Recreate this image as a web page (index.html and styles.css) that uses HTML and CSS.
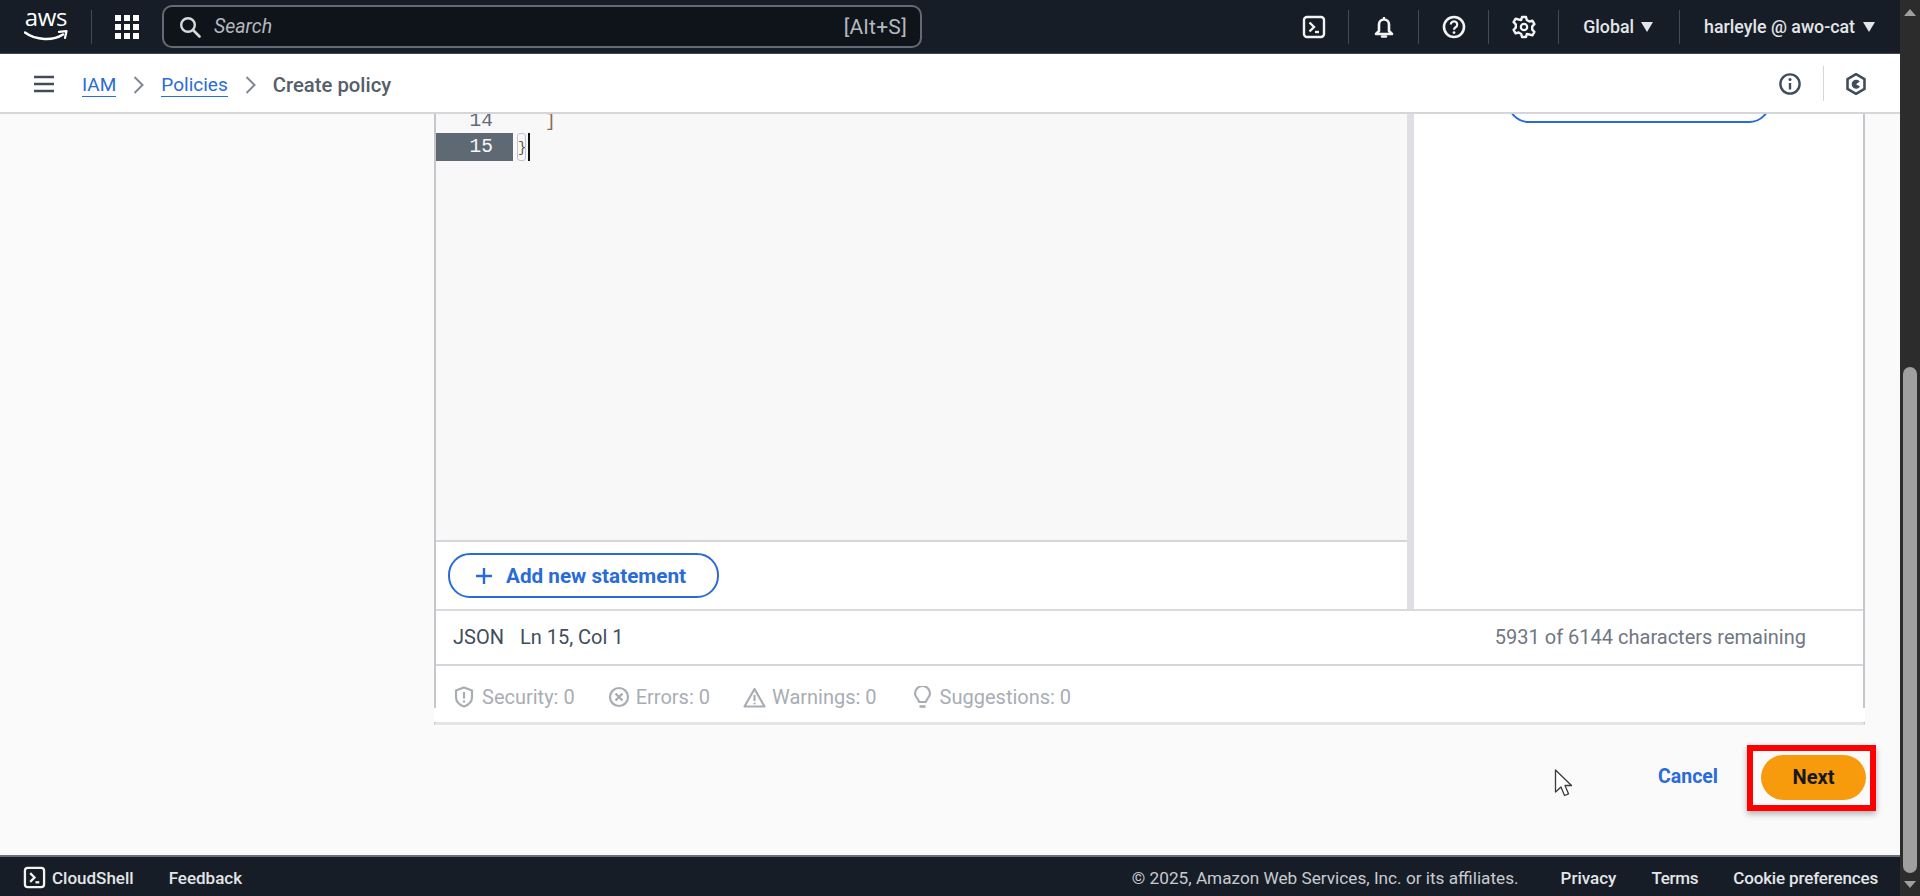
FILE: index.html
```html
<!DOCTYPE html>
<html lang="en">
<head>
<meta charset="utf-8">
<title>Create policy</title>
<link rel="stylesheet" href="styles.css">
</head>
<body>
<div class="app">
  <div class="page">
    <header class="topbar">
      <div class="logo">
        <span class="logo-text">aws</span>
        <svg class="smile" viewBox="0 0 44 12" width="44" height="12"><path d="M1 2.500C12 10.500 29 11 39 4.500" fill="none" stroke="#fff" stroke-width="2.600" stroke-linecap="round"/><path d="M35 1.800L42.500 1.200 41 8" fill="none" stroke="#fff" stroke-width="2.200" stroke-linecap="round" stroke-linejoin="round"/></svg>
      </div>
      <span class="vr vr-logo"></span>
      <svg class="grid-icon" viewBox="0 0 24 24" width="24" height="24"><g fill="#fff"><rect x="0" y="0" width="6" height="6"/><rect x="9" y="0" width="6" height="6"/><rect x="18" y="0" width="6" height="6"/><rect x="0" y="9" width="6" height="6"/><rect x="9" y="9" width="6" height="6"/><rect x="18" y="9" width="6" height="6"/><rect x="0" y="18" width="6" height="6"/><rect x="9" y="18" width="6" height="6"/><rect x="18" y="18" width="6" height="6"/></g></svg>
      <div class="search">
        <svg viewBox="0 0 22 22" width="22" height="22"><circle cx="9" cy="9" r="6.800" fill="none" stroke="#d5dbdb" stroke-width="2.400"/><path d="M14 14l6.500 6.500" stroke="#d5dbdb" stroke-width="2.600" stroke-linecap="round"/></svg>
        <span class="search-text">Search</span>
        <span class="search-key">[Alt+S]</span>
      </div>
      <div class="top-right">
        <svg class="ti" viewBox="0 0 24 24" width="24" height="24"><rect x="2" y="2" width="20" height="20" rx="3" fill="none" stroke="#f2f3f3" stroke-width="2.400"/><path d="M7.500 7.500l4.500 4.500-4.500 4.500" fill="none" stroke="#f2f3f3" stroke-width="2.400"/><path d="M13 17h4" stroke="#f2f3f3" stroke-width="2.400"/></svg>
        <span class="vr"></span>
        <svg class="ti" viewBox="0 0 24 24" width="24" height="24"><path d="M7 16V9.500a5 5 0 0 1 10 0V16l3 3H4z" fill="none" stroke="#f2f3f3" stroke-width="2.600" stroke-linejoin="round"/><path d="M10 21.500h4" stroke="#f2f3f3" stroke-width="2.400" stroke-linecap="round"/><path d="M12 2v2" stroke="#f2f3f3" stroke-width="2.200"/></svg>
        <span class="vr"></span>
        <svg class="ti" viewBox="0 0 24 24" width="24" height="24"><circle cx="12" cy="12" r="10" fill="none" stroke="#f2f3f3" stroke-width="2.600"/><path d="M8.800 9.500a3.200 3.200 0 1 1 4.800 2.800c-1 .6-1.600 1.200-1.600 2.400" fill="none" stroke="#f2f3f3" stroke-width="2.200"/><circle cx="12" cy="17.600" r="1.400" fill="#f2f3f3"/></svg>
        <span class="vr"></span>
        <svg class="ti" viewBox="0 0 24 24" width="24" height="24"><path d="M10 2h4l.8 3 2.600 1.500 3-.8 2 3.400-2.200 2.200v3.400l2.200 2.200-2 3.400-3-.8L14.800 19 14 22h-4l-.8-3-2.600-1.500-3 .8-2-3.400 2.200-2.200V9.300L1.600 7.100l2-3.400 3 .8L9.200 5z" fill="none" stroke="#f2f3f3" stroke-width="2.400" stroke-linejoin="round"/><circle cx="12" cy="12" r="3.200" fill="none" stroke="#f2f3f3" stroke-width="2.200"/></svg>
        <span class="vr"></span>
        <span class="top-label label-global">Global</span>
        <span class="caret"></span>
        <span class="vr vr-user"></span>
        <span class="top-label">harleyle @ awo-cat</span>
        <span class="caret caret-user"></span>
      </div>
    </header>

    <nav class="crumbbar">
      <svg class="burger" viewBox="0 0 20 18" width="20" height="18"><path d="M0 2h20M0 9h20M0 16h20" stroke="#414d5c" stroke-width="2.600"/></svg>
      <a class="crumb crumb-first">IAM</a>
      <svg class="chev" viewBox="0 0 11 18" width="11" height="18"><path d="M1.500 1l8 8-8 8" fill="none" stroke="#7d8998" stroke-width="2"/></svg>
      <a class="crumb">Policies</a>
      <svg class="chev" viewBox="0 0 11 18" width="11" height="18"><path d="M1.500 1l8 8-8 8" fill="none" stroke="#7d8998" stroke-width="2"/></svg>
      <span class="crumb-current">Create policy</span>
      <div class="crumb-right">
        <svg viewBox="0 0 22 22" width="22" height="22"><circle cx="11" cy="11" r="9.600" fill="none" stroke="#414d5c" stroke-width="2.400"/><path d="M11 10v6.500" stroke="#414d5c" stroke-width="2.400"/><circle cx="11" cy="6.500" r="1.500" fill="#414d5c"/></svg>
        <span class="vr vr-light"></span>
        <svg viewBox="0 0 20 22" width="20" height="22"><path d="M10 1.200l8.500 4.900v9.800L10 20.800l-8.500-4.900V6.100z" fill="none" stroke="#414d5c" stroke-width="2.600" stroke-linejoin="round"/><path d="M13.800 8.600a4.500 4.500 0 1 0 .2 5L10 11.200z" fill="#414d5c"/></svg>
      </div>
    </nav>

    <main class="main">
      <section class="card">
        <div class="workspace">
          <div class="left">
            <div class="code">
              <div class="line line-clipped"><span class="gutter">14</span><span class="src src-indent">]</span></div>
              <div class="line line-active"><span class="gutter gutter-active">15</span><span class="brace">}</span><span class="caret-bar"></span></div>
            </div>
            <div class="add-row">
              <button class="pill add-btn"><svg viewBox="0 0 18 18" width="18" height="18"><path d="M9 1v16M1 9h16" stroke="#2a6bd8" stroke-width="2.400"/></svg><span>Add new statement</span></button>
            </div>
          </div>
          <div class="splitter"></div>
          <aside class="right"><div class="pill ghost"></div></aside>
        </div>
        <div class="status">
          <span class="st-json">JSON</span><span class="st-pos">Ln 15, Col 1</span>
          <span class="st-count">5931 of 6144 characters remaining</span>
        </div>
        <div class="problems">
          <span class="prob"><svg viewBox="0 0 20 22" width="20" height="22"><path d="M10 1.500l8 3v6.500c0 5-3.500 8-8 9.500-4.500-1.500-8-4.500-8-9.500V4.500z" fill="none" stroke="#a8adb5" stroke-width="2.200"/><path d="M10 6v6.500" stroke="#a8adb5" stroke-width="2.200"/><circle cx="10" cy="15.500" r="1.200" fill="#a8adb5"/></svg>Security: 0</span>
          <span class="prob prob-tight"><svg viewBox="0 0 22 22" width="22" height="22"><circle cx="11" cy="11" r="9" fill="none" stroke="#a8adb5" stroke-width="2.200"/><path d="M7.500 7.500l7 7M14.500 7.500l-7 7" stroke="#a8adb5" stroke-width="2.400"/></svg>Errors: 0</span>
          <span class="prob prob-warn"><svg viewBox="0 0 23 21" width="23" height="21"><path d="M11.500 2l10 17.500h-20z" fill="none" stroke="#a8adb5" stroke-width="2.200" stroke-linejoin="round"/><path d="M11.500 8v6" stroke="#a8adb5" stroke-width="2.200"/><circle cx="11.500" cy="16.500" r="1.100" fill="#a8adb5"/></svg>Warnings: 0</span>
          <span class="prob prob-sugg"><svg viewBox="0 0 19 23" width="19" height="23"><path d="M6 16c0-3-4-4.500-4-8.500a7.500 7.500 0 0 1 15 0c0 4-4 5.500-4 8.500z" fill="none" stroke="#a8adb5" stroke-width="2.200" stroke-linejoin="round"/><path d="M6.500 20.500h6" stroke="#a8adb5" stroke-width="2.600"/></svg>Suggestions: 0</span>
        </div>
      </section>
      <div class="actions">
        <a class="cancel">Cancel</a>
        <button class="next">Next<span class="highlight"></span></button>
      </div>
      <svg class="pointer" viewBox="0 0 19 29" width="19" height="29"><path d="M1.500 1v22l5.500-5 3.500 8.500 4-1.700-3.500-8.300h6.500z" fill="#fff" stroke="#3a3a3a" stroke-width="1.300" stroke-linejoin="round"/></svg>
    </main>

    <footer class="footer">
      <svg viewBox="0 0 24 24" width="23" height="23"><rect x="2" y="2" width="20" height="20" rx="3" fill="none" stroke="#f2f3f3" stroke-width="2.400"/><path d="M7.500 7.500l4.500 4.500-4.500 4.500" fill="none" stroke="#f2f3f3" stroke-width="2.400"/><path d="M13 17h4" stroke="#f2f3f3" stroke-width="2.400"/></svg>
      <span class="ft-link ft-shell">CloudShell</span>
      <span class="ft-link ft-feedback">Feedback</span>
      <span class="ft-copy">© 2025, Amazon Web Services, Inc. or its affiliates.</span>
      <span class="ft-link ft-privacy">Privacy</span>
      <span class="ft-link ft-terms">Terms</span>
      <span class="ft-link ft-cookie">Cookie preferences</span>
    </footer>
  </div>

  <div class="scrollbar">
    <span class="sb-up"></span>
    <div class="sb-track"><div class="sb-thumb"></div></div>
    <span class="sb-down"></span>
  </div>
</div>
</body>
</html>
```

FILE: styles.css
```css
* { box-sizing: border-box; }
html, body { margin: 0; height: 100%; overflow: hidden; }
body { font-family: Roboto, "Noto Sans", "Liberation Sans", sans-serif; color: #414d5c; }
.app { display: flex; height: 896px; }
.page { width: 1900px; display: flex; flex-direction: column; }

.topbar { height: 54px; flex: none; background: #161d26; border-bottom: 1px solid #414750; display: flex; align-items: center; padding-left: 24px; color: #f2f3f3; }
.logo { width: 44px; height: 36px; display: flex; flex-direction: column; align-items: center; margin-top: -3px; }
.logo-text { font-family: "Open Sans", Roboto, sans-serif; font-size: 24px; line-height: 20px; color: #fff; letter-spacing: -0.3px; }
.smile { margin-top: 3px; flex: none; }
.vr { width: 1px; height: 34px; background: #424a55; flex: none; }
.vr-logo { margin-left: 23px; }
.grid-icon { margin-left: 23px; flex: none; }
.search { width: 760px; height: 43px; margin-left: 23px; border: 2.500px solid #656b74; border-radius: 10px; background: #0f141a; display: flex; align-items: center; padding: 0 13px 0 15px; }
.search-text { font-style: italic; font-size: 19.500px; color: #b4b9c0; margin-left: 13px; }
.search-key { margin-left: auto; font-size: 21px; letter-spacing: 0.3px; color: #b4b9c0; }
.top-right { margin-left: auto; display: flex; align-items: center; }
.ti { flex: none; margin: 0 22px 0 0; }
.top-right .vr { margin-right: 23px; }
.top-label { font-size: 17.800px; font-weight: 500; color: #e3e6e8; white-space: nowrap; }
.label-global { margin-left: 1px; }
.caret { width: 0; height: 0; border-left: 6px solid transparent; border-right: 6px solid transparent; border-top: 10px solid #e3e6e8; margin-left: 7px; flex: none; }
.top-right .vr-user { margin-left: 26px; margin-right: 24px; }
.caret-user { margin-left: 8px; margin-right: 25px; }

.crumbbar { height: 60px; flex: none; background: #fff; border-bottom: 2px solid #d5d6da; display: flex; align-items: center; padding: 3px 34px 0 34px; }
.burger { flex: none; margin-top: -2px; }
.crumb { font-size: 19px; color: #2a6bd8; border-bottom: 1.500px solid #2a6bd8; line-height: 23px; }
.crumb-first { margin-left: 28px; }
.chev { margin: 0 17px; flex: none; }
.crumb-current { font-size: 20.300px; font-weight: 500; color: #565e69; }
.crumb-right { margin-left: auto; display: flex; align-items: center; gap: 22px; margin-top: -2px; }
.vr-light { background: #d5d6da; height: 35px; }

.main { flex: 1; min-height: 0; overflow: hidden; background: #fafafa; position: relative; }
.card { margin-left: 434px; width: 1431px; background: #fff; border-left: 2px solid #c6c6cd; border-right: 2px solid #c6c6cd; border-bottom: 3px solid #e4e4e9; position: relative; }
.card::after { content: ""; position: absolute; left: -2px; right: -2px; bottom: 0; height: 14px; background: #fff; }
.workspace { height: 497px; display: flex; border-bottom: 2px solid #d9d9de; }
.left { flex: 1; min-width: 0; display: flex; flex-direction: column; }
.code { flex: 1; min-height: 0; background: #f8f8f8; border-bottom: 2px solid #d5d6da; overflow: hidden; font-family: "Liberation Mono", monospace; font-size: 18px; }
.line { display: flex; align-items: center; }
.line-clipped { height: 14px; line-height: 14px; margin-bottom: 5px; }
.gutter { width: 77px; padding-right: 20px; text-align: right; color: #5f6b7a; flex: none; font-size: 19.500px; }
.gutter-active { background: #5f6973; color: #f6f7f7; height: 28px; line-height: 28px; }
.src { color: #8a6a4c; }
.src-indent { margin-left: 32px; }
.brace { margin-left: 4px; width: 9px; height: 28px; line-height: 28px; border: 1px solid #c3c3dc; border-radius: 3px; font-size: 14px; color: #5e5232; text-align: center; overflow: hidden; }
.caret-bar { width: 2px; height: 28px; background: #111; margin-left: 2px; }
.add-row { height: 67px; padding: 11px 0 0 12px; flex: none; }
.pill { border: 2.200px solid #2a6bd8; border-radius: 22px; background: #fff; }
.add-btn { width: 271px; height: 45px; display: flex; align-items: center; justify-content: flex-start; gap: 13px; padding: 0 0 0 25px; font: 700 20.700px Roboto, sans-serif; color: #2a6bd8; white-space: nowrap; }
.splitter { width: 7px; background: #dedee3; flex: none; }
.right { width: 449px; flex: none; background: #fff; display: flex; justify-content: center; }
.ghost { width: 264px; height: 45px; margin-top: -36px; }

.status { height: 55px; display: flex; align-items: center; padding: 0 57px 2px 17px; border-bottom: 2px solid #d5d6da; font-size: 20px; }
.st-json { color: #414d5c; }
.st-pos { margin-left: 16px; color: #414d5c; }
.st-count { margin-left: auto; color: #6f7782; }
.problems { height: 56px; display: flex; align-items: center; padding: 6px 0 0 18px; gap: 33px; font-size: 20px; color: #a8adb5; background: #fff; }
.prob { display: flex; align-items: center; gap: 8px; position: relative; z-index: 1; }
.prob-tight { gap: 6px; }
.prob-warn { gap: 6px; }
.prob-sugg { margin-left: 3px; }

.actions { display: flex; justify-content: flex-end; align-items: center; margin-top: 30px; padding-right: 34px; gap: 43px; }
.cancel { font-size: 19.500px; font-weight: 700; color: #2a6bd8; margin-bottom: 2px; }
.next { width: 105px; height: 45px; border: 0; border-radius: 23px; background: #f79a0b; color: #15191e; font: 700 20px Roboto, sans-serif; position: relative; padding: 0 0 2px; }
.highlight { position: absolute; left: -14px; top: -10px; width: 129px; height: 66px; border: 6px solid #ff0000; box-shadow: 0 3px 6px rgba(0, 0, 0, 0.3); }
.pointer { position: absolute; left: 1554px; top: 655px; }

.footer { height: 41px; flex: none; background: #161d26; border-top: 2px solid #6b7076; display: flex; align-items: center; padding: 2px 22px 0 23px; font-size: 17px; color: #e3e6e8; }
.ft-link { font-weight: 500; white-space: nowrap; }
.ft-shell { margin-left: 6px; }
.ft-feedback { margin-left: 35px; }
.ft-copy { margin-left: auto; color: #c8ccd0; font-size: 17.200px; }
.ft-privacy { margin-left: 42px; }
.ft-terms { margin-left: 35px; letter-spacing: -0.3px; }
.ft-cookie { margin-left: 35px; letter-spacing: -0.15px; }

.scrollbar { width: 20px; flex: none; background: #2c2c2c; display: flex; flex-direction: column; align-items: center; }
.sb-up { margin-top: 9px; width: 0; height: 0; border-left: 6px solid transparent; border-right: 6px solid transparent; border-bottom: 7px solid #a0a0a0; }
.sb-track { flex: 1; width: 100%; padding-top: 351px; display: flex; justify-content: center; }
.sb-thumb { width: 14px; height: 506px; background: #9f9f9f; border-radius: 7px; }
.sb-down { margin-bottom: 8px; width: 0; height: 0; border-left: 6px solid transparent; border-right: 6px solid transparent; border-top: 7px solid #a0a0a0; }
```
